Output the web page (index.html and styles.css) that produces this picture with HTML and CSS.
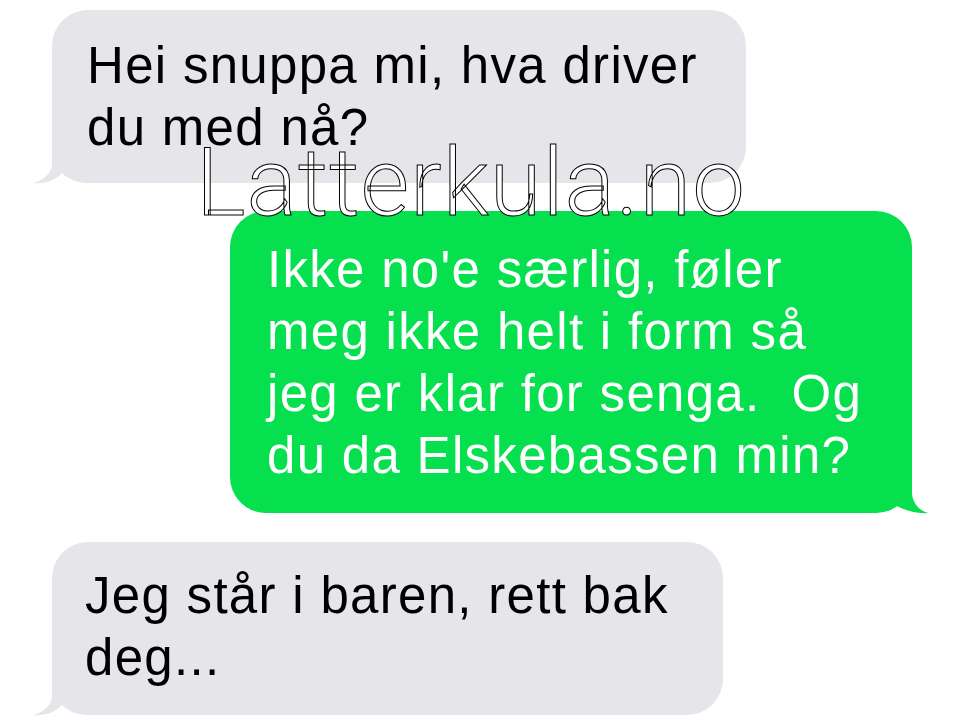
FILE: index.html
```html
<!DOCTYPE html>
<html lang="no">
<head>
<meta charset="utf-8">
<title>Latterkula.no</title>
<link rel="stylesheet" href="styles.css">
</head>
<body>
<main class="thread">
  <div class="bubble in first">
    <p class="msg">Hei snuppa mi, hva driver<br>du med nå?</p>
    <svg class="tail tail-left" width="60" height="40" viewBox="0 0 60 40"><path d="M20 2 L20 21 C20 30 12 37 1 40 C12 41 23 38 30 30 C36 36 45 40 58 40 L58 2 Z"/></svg>
  </div>
  <div class="bubble out">
    <p class="msg">Ikke no'e særlig, føler<br>meg ikke helt i form så<br>jeg er klar for senga.&nbsp; Og<br>du da Elskebassen min?</p>
    <svg class="tail tail-right" width="60" height="40" viewBox="0 0 60 40"><path d="M40 2 L40 19 C40 29 46 37 56 40 C46 41 32 38 20 30 C14 36 8 40 2 40 L2 2 Z"/></svg>
  </div>
  <div class="bubble in last">
    <p class="msg">Jeg står i baren, rett bak<br>deg...</p>
    <svg class="tail tail-left" width="60" height="40" viewBox="0 0 60 40"><path d="M20 2 L20 21 C20 30 12 37 1 40 C12 41 23 38 30 30 C36 36 45 40 58 40 L58 2 Z"/></svg>
  </div>
</main>
<div class="watermark">Latterkula.no</div>
</body>
</html>
```

FILE: styles.css
```css
html, body {
  margin: 0;
  padding: 0;
  background: #ffffff;
}
body {
  width: 960px;
  height: 721px;
  overflow: hidden;
  position: relative;
  font-family: "Liberation Sans", Arial, sans-serif;
}
.thread {
  display: flex;
  flex-direction: column;
  padding-top: 10px;
}
.bubble {
  position: relative;
  border-radius: 36px;
  box-sizing: border-box;
}
.msg {
  margin: 0;
  font-size: 51px;
  line-height: 62px;
  letter-spacing: 1.3px;
  white-space: nowrap;
}
.in {
  background: #e5e5ea;
  color: #000000;
  margin-left: 52px;
  padding-left: 35px;
}
.first {
  width: 694px;
  height: 173px;
  padding-top: 25px;
}
.last {
  width: 671px;
  height: 173px;
  padding-top: 23px;
  margin-top: 29px;
  padding-left: 33px;
}
.out {
  background: #06e04f;
  color: #ffffff;
  margin-left: 230px;
  width: 682px;
  height: 302px;
  margin-top: 28px;
  padding-left: 37px;
  padding-top: 28px;
}
.tail {
  position: absolute;
  bottom: 0;
  overflow: visible;
}
.tail-left {
  left: -20px;
  fill: #e5e5ea;
}
.tail-right {
  right: -20px;
  fill: #06e04f;
}
.watermark {
  position: absolute;
  left: 196px;
  top: 133px;
  font-family: Roboto, "Liberation Sans", sans-serif;
  font-weight: 300;
  font-size: 94px;
  line-height: 100px;
  letter-spacing: 1px;
  color: #ffffff;
  -webkit-text-stroke: 1px #000000;
}
```
